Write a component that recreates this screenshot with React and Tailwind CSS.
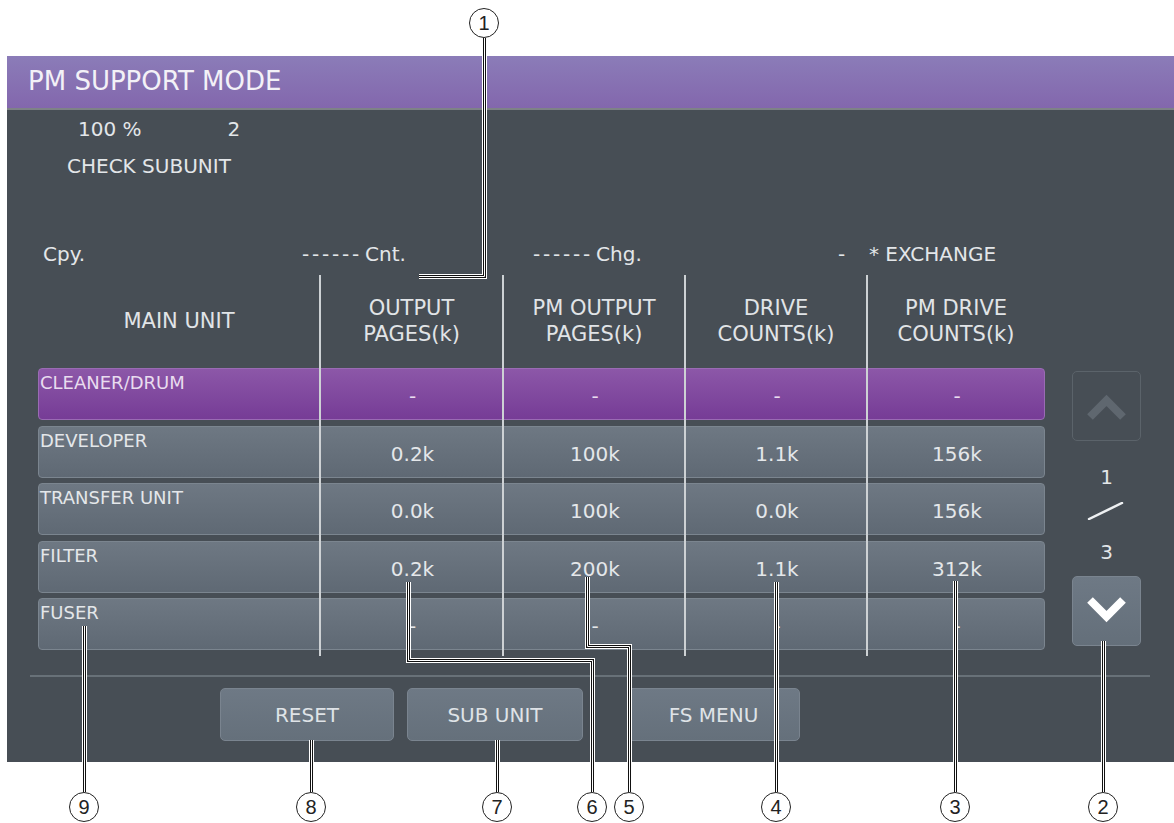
import React from "react";

// PM support mode screen with numbered callouts
const UNITS = [
  { label: "CLEANER/DRUM", values: ["-", "-", "-", "-"], active: true },
  { label: "DEVELOPER", values: ["0.2k", "100k", "1.1k", "156k"] },
  { label: "TRANSFER UNIT", values: ["0.0k", "100k", "0.0k", "156k"] },
  { label: "FILTER", values: ["0.2k", "200k", "1.1k", "312k"] },
  { label: "FUSER", values: ["-", "-", "-", "-"] },
];

const HEADERS = [
  ["MAIN UNIT"],
  ["OUTPUT", "PAGES(k)"],
  ["PM OUTPUT", "PAGES(k)"],
  ["DRIVE", "COUNTS(k)"],
  ["PM DRIVE", "COUNTS(k)"],
];

// leader lines sit on half pixels so the 5/3/1 strokes stay crisp
const LEADERS = [
  "M484.5 38 L484.5 276.5 L419 276.5",
  "M84.5 626 L84.5 792",
  "M311.5 740 L311.5 792",
  "M497.5 740 L497.5 792",
  "M408.5 582 L408.5 660.5 L592.5 660.5 L592.5 792",
  "M587.5 577 L587.5 646.5 L629.5 646.5 L629.5 792",
  "M776.5 582 L776.5 792",
  "M955.5 581 L955.5 792",
  "M1103.5 641 L1103.5 792",
];

const BADGES = [
  { n: "1", cls: "left-[469px] top-[8px]" },
  { n: "9", cls: "left-[69px] top-[792px]" },
  { n: "8", cls: "left-[296px] top-[792px]" },
  { n: "7", cls: "left-[482px] top-[792px]" },
  { n: "6", cls: "left-[577px] top-[792px]" },
  { n: "5", cls: "left-[614px] top-[792px]" },
  { n: "4", cls: "left-[761px] top-[792px]" },
  { n: "3", cls: "left-[940px] top-[792px]" },
  { n: "2", cls: "left-[1088px] top-[792px]" },
];

const GRID = "grid grid-cols-[282px_183px_182px_182px_178px]";

function UnitRow({ unit }) {
  const tone = unit.active
    ? "bg-linear-to-b from-[#8c57a8] to-[#763c96] border-[#9a6bb4] text-[#e9dcef]"
    : "bg-linear-to-b from-[#6e7883] to-[#5f6974] border-[#7b858f] text-[#e4e7ea]";

  return (
    <div className={`${GRID} h-[52px] rounded-[4px] border ${tone}`}>
      <div className="pl-[1px] pt-[3px] text-[18px] leading-[22px]">{unit.label}</div>
      {unit.values.map((v, i) => (
        <div key={i} className="pt-[15px] text-center text-[20px] leading-[24px]">
          {v}
        </div>
      ))}
    </div>
  );
}

function PanelButton({ label, className }) {
  return (
    <div
      className={`h-[53px] rounded-[5px] border border-[#7a848f] bg-linear-to-b from-[#6e7985] to-[#65707b] flex items-center justify-center text-[20px] text-[#dfe3e7] ${className}`}
    >
      {label}
    </div>
  );
}

export default function App() {
  return (
    <div className="relative w-[1174px] h-[823px] bg-white overflow-hidden pt-[56px] pl-[7px] font-['DejaVu_Sans',sans-serif]">
      <div className="w-[1167px] h-[706px] bg-[#474e55] text-[#e3e6e9]">
        <div className="h-[54px] border-b-2 border-[#7e8287] bg-linear-to-b from-[#8b7cb8] to-[#8367ad] flex items-center pl-[21px] pb-[2px] text-[26px] text-[#f3f1f7]">
          PM SUPPORT MODE
        </div>

        <div className="pt-[7px] pl-[71px] flex text-[20px] leading-[24px]">
          <span>100 %</span>
          <span className="ml-[86px]">2</span>
        </div>
        <div className="mt-[13px] pl-[60px] text-[20px] leading-[24px]">CHECK SUBUNIT</div>

        <div className="mt-[64px] pl-[36px] flex text-[20px] leading-[24px]">
          <span className="w-[259px]">Cpy.</span>
          <span className="w-[231px] flex">
            <span className="tracking-[2.8px]">------</span>
            <span className="ml-[3px]">Cnt.</span>
          </span>
          <span className="w-[305px] flex">
            <span className="tracking-[2.8px]">------</span>
            <span className="ml-[3px]">Chg.</span>
          </span>
          <span className="w-[31px]">-</span>
          <span>* EXCHANGE</span>
        </div>

        <div className="mt-[9px] pl-[31px] flex items-start">
          <div className="relative w-[1007px]">
            <div className={`${GRID} h-[93px] items-center pb-[1px] text-[21px] leading-[26px] text-[#e1e4e7]`}>
              {HEADERS.map((lines, i) => (
                <div key={i} className="text-center">
                  {lines.map((l) => (
                    <div key={l}>{l}</div>
                  ))}
                </div>
              ))}
            </div>

            <div className="flex flex-col gap-[5.5px]">
              {UNITS.map((u) => (
                <UnitRow key={u.label} unit={u} />
              ))}
            </div>

            <div className="absolute left-[281px] top-0 bottom-[-6px] w-[2px] bg-[#cdd1d4]" />
            <div className="absolute left-[464px] top-0 bottom-[-6px] w-[2px] bg-[#cdd1d4]" />
            <div className="absolute left-[646px] top-0 bottom-[-6px] w-[2px] bg-[#cdd1d4]" />
            <div className="absolute left-[828px] top-0 bottom-[-6px] w-[2px] bg-[#cdd1d4]" />
          </div>

          <div className="ml-[27px] w-[69px] pt-[96px] flex flex-col items-center text-[20px] leading-[24px]">
            <div className="w-[69px] h-[70px] rounded-[5px] border border-[#5b636a]">
              <svg width="67" height="68" viewBox="0 0 67 68">
                <polyline points="17,45 33.5,28.5 50,45" fill="none" stroke="#5f676f" strokeWidth="8" />
              </svg>
            </div>
            <div className="mt-[24px]">1</div>
            <svg className="mt-[13px]" width="69" height="18" viewBox="0 0 69 18">
              <line x1="17" y1="17" x2="50" y2="1" stroke="#eef0f2" strokeWidth="2.5" strokeLinecap="round" />
            </svg>
            <div className="mt-[20px]">3</div>
            <div className="mt-[12px] w-[69px] h-[70px] rounded-[5px] border border-[#7a848f] bg-linear-to-b from-[#6e7985] to-[#646f7a]">
              <svg width="67" height="68" viewBox="0 0 67 68">
                <polyline points="17,23 33.5,39.5 50,23" fill="none" stroke="#ffffff" strokeWidth="8" />
              </svg>
            </div>
          </div>
        </div>

        <div className="mt-[25px] ml-[23px] w-[1120px] h-[2px] bg-[#687178]" />

        <div className="mt-[11px] pl-[213px] flex">
          <PanelButton label="RESET" className="w-[174px]" />
          <PanelButton label="SUB UNIT" className="ml-[13px] w-[176px]" />
          <PanelButton label="FS MENU" className="ml-[44px] w-[173px]" />
        </div>
      </div>

      <svg className="absolute inset-0 pointer-events-none" width="1174" height="823" viewBox="0 0 1174 823">
        {LEADERS.map((d, i) => (
          <g key={i} fill="none" strokeLinejoin="miter">
            <path d={d} stroke="#ffffff" strokeWidth="5" />
            <path d={d} stroke="#111111" strokeWidth="3" />
            <path d={d} stroke="#ffffff" strokeWidth="1" />
          </g>
        ))}
      </svg>

      {BADGES.map((b) => (
        <div
          key={b.n}
          className={`absolute ${b.cls} w-[30px] h-[30px] rounded-full border-[1.5px] border-[#222] bg-white flex items-center justify-center text-[20px] leading-none text-[#222] font-['Liberation_Sans',sans-serif]`}
        >
          {b.n}
        </div>
      ))}
    </div>
  );
}
